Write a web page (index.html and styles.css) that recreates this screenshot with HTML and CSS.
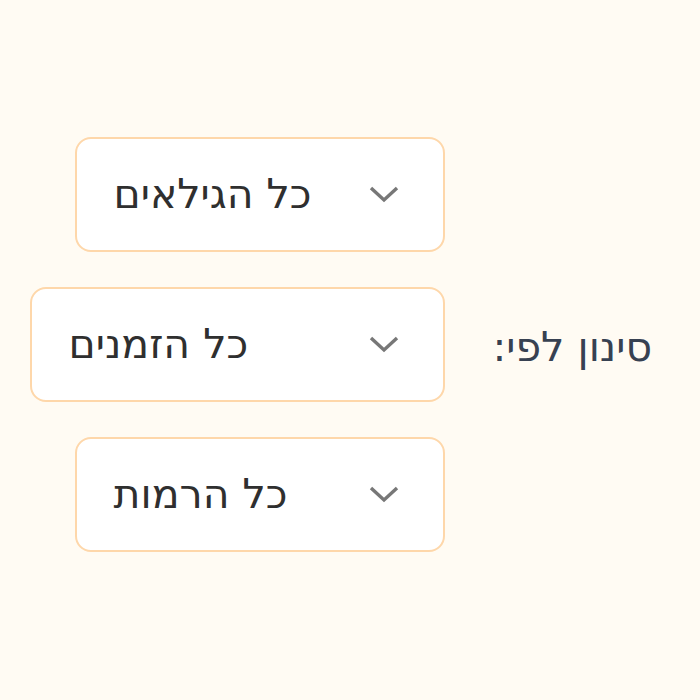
FILE: index.html
```html
<!DOCTYPE html>
<html lang="he" dir="rtl">
<head>
    <meta charset="UTF-8">
    <meta name="viewport" content="width=device-width, initial-scale=1.0">
    <title>סינון</title>
    <link rel="stylesheet" href="styles.css">
</head>
<body>
<div class="filters">
    <span class="filters-label">סינון לפי:</span>

    <div class="filters-list">
        <div class="select" role="button">
            <span class="select-value">כל הגילאים</span>
            <svg class="chevron" width="30" height="18" viewBox="0 0 30 18"><path d="M2 3 L15 15 L28 3" fill="none" stroke="#777" stroke-width="3.4"/></svg>
        </div>

        <div class="select select-wide" role="button">
            <span class="select-value">כל הזמנים</span>
            <svg class="chevron" width="30" height="18" viewBox="0 0 30 18"><path d="M2 3 L15 15 L28 3" fill="none" stroke="#777" stroke-width="3.4"/></svg>
        </div>

        <div class="select" role="button">
            <span class="select-value">כל הרמות</span>
            <svg class="chevron" width="30" height="18" viewBox="0 0 30 18"><path d="M2 3 L15 15 L28 3" fill="none" stroke="#777" stroke-width="3.4"/></svg>
        </div>
    </div>
</div>
</body>
</html>
```

FILE: styles.css
```css
body {
    margin: 0;
    height: 700px;
    box-sizing: border-box;
    padding-bottom: 12px;
    background-color: #fffbf3;
    font-family: "DejaVu Sans", sans-serif;
    display: flex;
    align-items: center;
}
.filters {
    display: flex;
    align-items: center;
    gap: 48px;
    padding-right: 48px;
}
.filters-label {
    font-size: 41px;
    color: #374151;
    padding-top: 6px;
}
.filters-list {
    display: flex;
    flex-direction: column;
    align-items: flex-start;
    gap: 35px;
}
.select {
    direction: ltr;
    width: 370px;
    height: 115px;
    box-sizing: border-box;
    display: flex;
    align-items: center;
    justify-content: space-between;
    padding: 0 44px 0 37px;
    background-color: #fff;
    border: 2px solid #fed7aa;
    border-radius: 16px;
    cursor: pointer;
}
.select-wide {
    width: 415px;
}
.select-value {
    direction: rtl;
    font-size: 41px;
    color: #2f2f2f;
}
.chevron {
    display: block;
}
```
